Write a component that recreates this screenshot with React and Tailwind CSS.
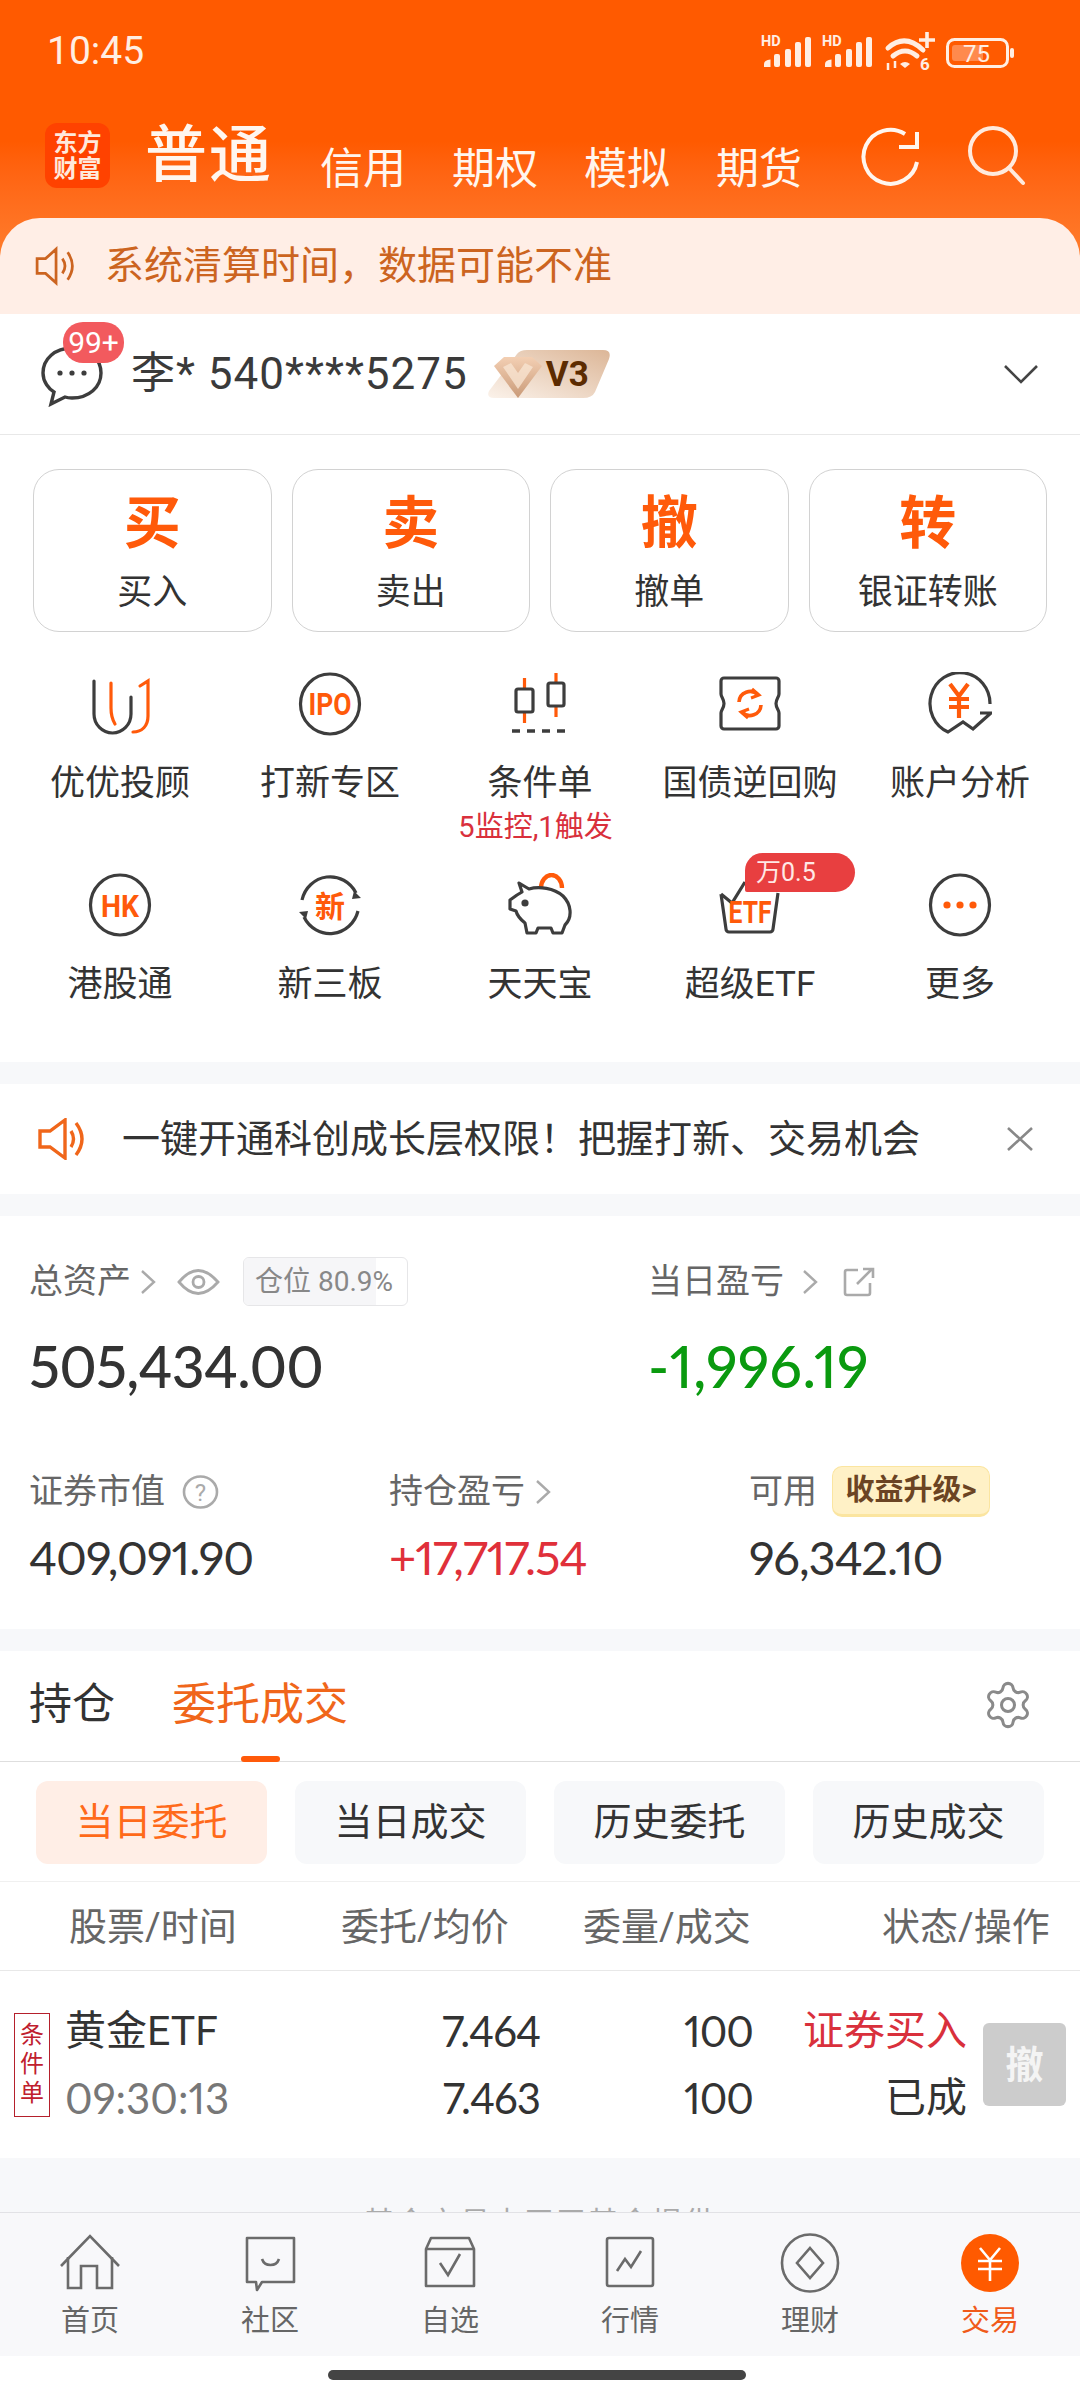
import { Settings } from 'lucide-react';

const DARK = '#3d3d3d';
const ORANGE = '#ff5a0a';
const NUM = "font-['Lato','Noto_Sans_CJK_SC',sans-serif] proportional-nums";

// ── Status bar glyphs ───────────────────────────────────────────────────────
function Signal({ x }) {
  return (
    <g transform={`translate(${x} 0)`} fill="#ffeee3">
      <text x="11" y="25" fontSize="14.5" fontWeight="700" fontFamily="Roboto, sans-serif">HD</text>
      <path d="M14 46 v-3 q0-4 6.5-4.5 v7.5 z" />
      <rect x="24" y="33" width="6" height="13" rx="2" />
      <rect x="35" y="28" width="6" height="18" rx="2" />
      <rect x="45" y="21" width="6" height="25" rx="2" />
      <rect x="55" y="16" width="6" height="30" rx="2" />
    </g>
  );
}

function StatusIcons() {
  return (
    <svg width="280" height="60" viewBox="0 0 280 60" className="block">
      <Signal x="0" />
      <Signal x="61" />
      <g fill="none" stroke="#ffeee3" strokeWidth="5" strokeLinecap="round">
        <path d="M138 27 q17-15 35 2" />
        <path d="M143 35 q12-10 24 0" />
      </g>
      <path d="M150 43 q5-4 10 0 l-5 4 z" fill="#ffeee3" />
      <path d="M177 11 v16 M169 19 h16" stroke="#ffeee3" strokeWidth="3.6" />
      <text x="170" y="49" fontSize="17" fontWeight="700" fill="#ffeee3" fontFamily="Roboto, sans-serif">6</text>
      <path d="M138 42 v7 M145 40 v7" stroke="#ffeee3" strokeWidth="2.5" />
      <rect x="197.5" y="18.5" width="60" height="27" rx="7" fill="none" stroke="#ffeee3" strokeWidth="3" />
      <rect x="202" y="24" width="31" height="16" rx="3" fill="#ff8a4d" />
      <text x="213" y="41" fontSize="24" fill="#ffeee3" fontFamily="Roboto, sans-serif">75</text>
      <rect x="260" y="27" width="4" height="10" rx="2" fill="#ffeee3" />
    </svg>
  );
}

// ── Function grid icons ─────────────────────────────────────────────────────
function IconCircle({ children }) {
  return (
    <svg width="64" height="64" viewBox="0 0 64 64" fill="none">
      <ellipse cx="32" cy="32" rx="29.5" ry="30" stroke={DARK} strokeWidth="3.2" />
      {children}
    </svg>
  );
}

function Glyph({ size = 26, y = 41, fit, children }) {
  return (
    <text
      x="32"
      y={y}
      textAnchor="middle"
      fontSize={size}
      fontWeight="700"
      fill={ORANGE}
      fontFamily="Roboto, 'Noto Sans CJK SC', sans-serif"
      textLength={fit}
      lengthAdjust={fit ? 'spacingAndGlyphs' : undefined}
    >
      {children}
    </text>
  );
}

function Svg64({ children }) {
  return (
    <svg width="64" height="64" viewBox="0 0 64 64" fill="none" strokeWidth="3.2">
      {children}
    </svg>
  );
}

const GRID_ICONS = {
  youyou: (
    <Svg64>
      <path d="M6 9 V42 a18.5 19 0 0 0 37 0 V25" stroke={DARK} strokeLinecap="round" />
      <path d="M23 11 V36 c0 6 1 11 4 16" stroke={ORANGE} strokeLinecap="round" />
      <path d="M45 60 c9 0 15-6 15-16 V9 l-8 5" stroke={ORANGE} strokeLinecap="round" />
    </Svg64>
  ),
  ipo: <IconCircle><Glyph size={31} y={43} fit={43}>IPO</Glyph></IconCircle>,
  candle: (
    <Svg64>
      <path d="M16.5 6 V17 M16.5 40 V51 M48 1 V11 M48 34 V45" stroke={ORANGE} />
      <rect x="8" y="17" width="17" height="23" rx="2" stroke={DARK} />
      <rect x="40" y="11" width="16" height="23" rx="2" stroke={DARK} />
      <path d="M4 59 H60" stroke={DARK} strokeWidth="3.6" strokeDasharray="8 7" />
    </Svg64>
  ),
  ticket: (
    <Svg64>
      <path d="M6 6 H58 a3 3 0 0 1 3 3 V22 c0 3-3 5-3 9.5 s3 6.5 3 9.5 V54 a3 3 0 0 1-3 3 H6 a3 3 0 0 1-3-3 V41 c0-3 3-5 3-9.5 S3 25 3 22 V9 a3 3 0 0 1 3-3 z" stroke={DARK} />
      <path d="M21 30 a11 11 0 0 1 19-7 M43 33 a11 11 0 0 1-19 7" stroke={ORANGE} strokeWidth="3.6" />
      <path d="M34 17 l7 6 -8 3 M30 46 l-7-6 8-3" stroke={ORANGE} strokeWidth="3" />
    </Svg64>
  ),
  yen: (
    <Svg64>
      <path d="M62 32 A30 31 0 1 0 20 60 L35 50 L45 57 L63 41 H52" stroke={DARK} strokeLinejoin="miter" />
      <path d="M22 12 L31 24 L40 12 M21 27 H41 M21 35 H41 M31 24 V46" stroke={ORANGE} strokeWidth="4.2" />
    </Svg64>
  ),
  hk: <IconCircle><Glyph size={32} y={44} fit={38}>HK</Glyph></IconCircle>,
  xin: (
    <Svg64>
      <path d="M4 27 A29 30 0 0 1 58 20 M60 38 A29 30 0 0 1 6 44" stroke={DARK} />
      <path d="M56 18 L63 25 L54 26 z M8 46 L1 39 L10 38 z" fill={DARK} />
      <Glyph size={30} y={44}>新</Glyph>
    </Svg64>
  ),
  pig: (
    <Svg64>
      <path d="M33 15 a10.5 13 0 0 1 21 0" stroke={ORANGE} strokeWidth="4.4" />
      <path d="M11 10 L21 16 C31 13 46 15 55 23 C63 31 65 44 57 52 L54 60 H45 L43 55 H30 L28 60 H19 L17 50 C12 46 9 42 8 38 L2 36 V27 L9 22 L14 19 z" stroke={DARK} strokeLinejoin="round" />
      <circle cx="17" cy="30" r="3.6" fill={DARK} />
    </Svg64>
  ),
  etf: (
    <Svg64>
      <path d="M3 21 L14 30 L27 9 M3 21 L8 56 a3 3 0 0 0 3 3 H52 a3 3 0 0 0 3-3 L60 20" stroke={DARK} />
      <Glyph size={32} y={50} fit={43}>ETF</Glyph>
    </Svg64>
  ),
  more: (
    <IconCircle>
      <circle cx="19" cy="32" r="3.6" fill={ORANGE} />
      <circle cx="32" cy="32" r="3.6" fill={ORANGE} />
      <circle cx="45" cy="32" r="3.6" fill={ORANGE} />
    </IconCircle>
  ),
};

const GRID = [
  { icon: 'youyou', label: '优优投顾' },
  { icon: 'ipo', label: '打新专区' },
  { icon: 'candle', label: '条件单', sub: '5监控,1触发' },
  { icon: 'ticket', label: '国债逆回购' },
  { icon: 'yen', label: '账户分析' },
  { icon: 'hk', label: '港股通' },
  { icon: 'xin', label: '新三板' },
  { icon: 'pig', label: '天天宝' },
  { icon: 'etf', label: '超级ETF', badge: '万0.5' },
  { icon: 'more', label: '更多' },
];

const ACTIONS = [
  ['买', '买入'],
  ['卖', '卖出'],
  ['撤', '撤单'],
  ['转', '银证转账'],
];

// ── Bottom navigation icons ─────────────────────────────────────────────────
function NavSvg({ children }) {
  return (
    <svg width="60" height="60" viewBox="0 0 60 60" fill="none" stroke="#6b6b6b" strokeWidth="2.6">
      {children}
    </svg>
  );
}

const NAV = [
  {
    label: '首页',
    icon: (
      <NavSvg>
        <path d="M1 33 L30 3 L59 33" />
        <path d="M8 24 V55 H21 V33 H37 V55 H52 V24" />
      </NavSvg>
    ),
  },
  {
    label: '社区',
    icon: (
      <NavSvg>
        <path d="M7 5 H54 V49 H22 L17 57 L16 49 H7 z" strokeLinejoin="round" />
        <path d="M22 26 a9 9 0 0 0 17 0" />
      </NavSvg>
    ),
  },
  {
    label: '自选',
    icon: (
      <NavSvg>
        <path d="M6 16 L11 5 H49 L54 16 V53 H6 z M6 16 H54" strokeLinejoin="round" />
        <path d="M20 30 L28 42 L40 21" />
      </NavSvg>
    ),
  },
  {
    label: '行情',
    icon: (
      <NavSvg>
        <rect x="7" y="5" width="46" height="48" rx="2" />
        <path d="M17 38 L25 26 L31 34 L41 18" />
      </NavSvg>
    ),
  },
  {
    label: '理财',
    icon: (
      <NavSvg>
        <ellipse cx="30" cy="30" rx="28" ry="28.5" />
        <path d="M30 15 L43 30 L30 45 L17 30 z" />
      </NavSvg>
    ),
  },
  {
    label: '交易',
    active: true,
    icon: (
      <svg width="60" height="60" viewBox="0 0 60 60" fill="none">
        <circle cx="30" cy="30" r="29" fill="#ff5a00" />
        <path d="M20 15 L30 27 L40 15 M18 28 H42 M18 36 H42 M30 27 V48" stroke="#fff" strokeWidth="2.6" />
      </svg>
    ),
  },
];

const CHIPS = ['当日委托', '当日成交', '历史委托', '历史成交'];

function Chevron({ className }) {
  return (
    <svg className={className} width="16" height="26" viewBox="0 0 16 26" fill="none" stroke="#aaa" strokeWidth="2.4">
      <path d="M2 2 L14 13 L2 24" />
    </svg>
  );
}

export default function App() {
  return (
    <div className="flex h-[2400px] w-[1080px] flex-col overflow-hidden bg-[#f7f8fa] font-['Roboto','Noto_Sans_CJK_SC',sans-serif] text-[#333]">
      {/* ── Orange header + notice ── */}
      <div className="bg-gradient-to-b from-[#ff5a00] from-[45%] to-[#ff7f2e] to-[85%]">
        <div className="flex h-[102px] items-center justify-between pl-[47px] pr-[50px]">
          <span className="text-[39px] leading-none text-[#ffeee3]">10:45</span>
          <StatusIcons />
        </div>

        <div className="flex h-[116px] items-start pl-[45px] pr-[54px] pt-[21px] text-[#fff6ef]">
          <div className="flex h-[65px] w-[65px] flex-col items-center justify-center rounded-[12px] bg-[#ff4200] text-[24px] font-bold leading-[26px] text-[#ffe9dc]">
            <span>东方</span>
            <span>财富</span>
          </div>
          <span className="ml-[35px] mt-[-3px] text-[62px] font-medium leading-[72px] tracking-[2px]">普通</span>
          <div className="ml-[47px] mt-[21px] flex gap-[46px] text-[43px] leading-[50px]">
            <span>信用</span>
            <span>期权</span>
            <span>模拟</span>
            <span>期货</span>
          </div>
          <div className="ml-auto flex gap-[45px] pt-[3px]">
            <svg width="60" height="60" viewBox="0 0 60 60" fill="none" stroke="#fff6ef" strokeWidth="4">
              <path d="M44 8 A27 27 0 1 0 56 36" />
              <path d="M56 6 V21 H38" />
            </svg>
            <svg width="60" height="60" viewBox="0 0 60 60" fill="none" stroke="#ffeadd" strokeWidth="4">
              <circle cx="27" cy="25" r="23" />
              <path d="M43 42 L57 57" strokeLinecap="round" />
            </svg>
          </div>
        </div>

        <div className="flex h-[96px] items-center rounded-t-[40px] bg-[#ffeee6] pl-[35px] text-[39px] text-[#cc6420]">
          <svg width="40" height="40" viewBox="0 0 38 38" fill="none" stroke="#cc6420" strokeWidth="2.6">
            <path d="M2 12 H10 L20 3 V35 L10 26 H2 z" />
            <path d="M26 12 q5 7 0 14 M31 6 q9 13 0 26" />
          </svg>
          <span className="ml-[30px]">系统清算时间，数据可能不准</span>
        </div>
      </div>

      {/* ── Account row ── */}
      <div className="flex h-[121px] items-center border-b border-[#e8e8e8] bg-white pl-[41px] pr-[42px]">
        <div className="relative mt-[4px] h-[62px] w-[62px]">
          <svg width="62" height="62" viewBox="0 0 62 62" fill="none" stroke={DARK} strokeWidth="3.4">
            <path d="M31 3 C14 3 2 14 2 28 C2 37 8 44 13 47 L10 59 L24 52 C27 53 29 53 31 53 C48 53 60 42 60 28 C60 14 48 3 31 3z" />
            <circle cx="19" cy="28" r="2.6" fill={DARK} stroke="none" />
            <circle cx="31" cy="28" r="2.6" fill={DARK} stroke="none" />
            <circle cx="43" cy="28" r="2.6" fill={DARK} stroke="none" />
          </svg>
          <span className="absolute left-[22px] top-[-23px] flex h-[41px] w-[61px] items-center justify-center rounded-[20px] bg-[#f25a5e] text-[30px] leading-none text-white">99+</span>
        </div>
        <span className="ml-[28px] text-[44px] tracking-[1px] text-[#3a3a3a]">李* 540****5275</span>
        <div className="relative ml-[19px] flex h-[50px] w-[124px] items-center">
          <svg className="absolute inset-0" width="124" height="50" viewBox="0 0 124 50">
            <defs>
              <linearGradient id="v3bg" x1="0" y1="1" x2="1" y2="0">
                <stop offset="0" stopColor="#fbf2ea" />
                <stop offset="1" stopColor="#dcb697" />
              </linearGradient>
              <linearGradient id="gem" x1="0" y1="0" x2="0" y2="1">
                <stop offset="0" stopColor="#f3cfb3" />
                <stop offset="1" stopColor="#c99a78" />
              </linearGradient>
            </defs>
            <path d="M30 5 Q33 1 40 1 H116 Q125 1 122 10 L108 43 Q105 49 96 49 H7 Q-1 49 2 42 z" fill="url(#v3bg)" />
            <path d="M7 17 L17 8 H45 L55 17 L31 49 z" fill="url(#gem)" />
            <path d="M16 18 L31 40 L46 18 L38 14 L31 24 L24 14 z" fill="#f8e3d1" opacity="0.8" />
          </svg>
          <span className="relative ml-[59px] text-[35px] font-bold leading-none text-[#5c2b00]">V3</span>
        </div>
        <svg className="ml-auto" width="34" height="20" viewBox="0 0 34 20" fill="none" stroke="#444" strokeWidth="2.6">
          <path d="M1 2 L17 18 L33 2" />
        </svg>
      </div>

      {/* ── Trade actions + function grid ── */}
      <div className="h-[627px] bg-white">
        <div className="grid grid-cols-4 gap-[20px] px-[33px] pt-[34px]">
          {ACTIONS.map(([big, label]) => (
            <div key={big} className="flex h-[163px] flex-col items-center rounded-[26px] border border-[#d2d2d2] pt-[19px]">
              <span className="text-[57px] font-bold leading-[70px] text-[#ff5a0a]">{big}</span>
              <span className="mt-[12px] text-[35px] leading-[44px]">{label}</span>
            </div>
          ))}
        </div>

        <div className="grid grid-cols-5 gap-y-[28px] px-[15px] pt-[40px]">
          {GRID.map((item) => (
            <div key={item.label} className="flex flex-col items-center">
              <div className="relative h-[64px] w-[64px]">
                {GRID_ICONS[item.icon]}
                {item.badge && (
                  <span className="absolute left-[27px] top-[-20px] flex h-[39px] w-[110px] items-center rounded-bl-[2px] rounded-br-[20px] rounded-tl-[18px] rounded-tr-[20px] bg-[#e83f40] pl-[11px] text-[25px] leading-none text-[#ffe8e6]">
                    {item.badge}
                  </span>
                )}
              </div>
              <span className="mt-[28px] whitespace-nowrap text-[35px] leading-[40px]">{item.label}</span>
              {item.sub && <span className="mr-[9px] mt-[5px] whitespace-nowrap text-[29px] leading-[36px] text-[#d9303c]">{item.sub}</span>}
            </div>
          ))}
        </div>
      </div>

      {/* ── Promo banner ── */}
      <div className="mt-[22px] flex h-[110px] items-center bg-white pl-[38px] pr-[47px]">
        <svg width="47" height="42" viewBox="0 0 47 42" fill="none" stroke="#f0661a" strokeWidth="3.4">
          <path d="M2 13 H12 L27 2 V40 L12 29 H2 z" />
          <path d="M33 13 q5 8 0 16 M38 5 q12 16 0 32" />
        </svg>
        <span className="ml-[37px] whitespace-nowrap text-[38px] text-[#333]">一键开通科创成长层权限！把握打新、交易机会</span>
        <svg className="ml-auto" width="26" height="24" viewBox="0 0 26 24" fill="none" stroke="#888" strokeWidth="2.6">
          <path d="M1 1 L25 23 M25 1 L1 23" />
        </svg>
      </div>

      {/* ── Assets ── */}
      <div className="mt-[22px] h-[413px] bg-white pl-[29px] pr-[30px] pt-[41px]">
        <div className="flex">
          <div className="w-[619px]">
            <div className="flex h-[49px] items-center text-[34px] text-[#666]">
              <span>总资产</span>
              <Chevron className="ml-[9px]" />
              <svg className="ml-[21px]" width="43" height="26" viewBox="0 0 43 26" fill="none" stroke="#aaa" strokeWidth="2.8">
                <path d="M2 13 Q21 -10 41 13 Q21 36 2 13 z" />
                <circle cx="21.5" cy="13" r="5.5" />
              </svg>
              <div className="relative ml-[23px] flex h-[49px] w-[165px] items-center overflow-hidden rounded-[6px] border border-[#e6e6e8] bg-white pl-[11px] text-[28px] leading-none text-[#888]">
                <div className="absolute inset-y-0 left-0 w-[81%] bg-[#f6f6f8]" />
                <span className="relative whitespace-nowrap">仓位 80.9%</span>
              </div>
            </div>
            <div className={`${NUM} mt-[30px] text-[57px] font-medium leading-[60px] tracking-[-0.8px] text-[#333]`}>505,434.00</div>
          </div>
          <div>
            <div className="flex h-[49px] items-center text-[34px] text-[#666]">
              <span>当日盈亏</span>
              <Chevron className="ml-[18px]" />
              <svg className="ml-[25px]" width="32" height="30" viewBox="0 0 32 30" fill="none" stroke="#aaa" strokeWidth="2.6">
                <path d="M15 3 H4 a2 2 0 0 0-2 2 V26 a2 2 0 0 0 2 2 H25 a2 2 0 0 0 2-2 V16" />
                <path d="M14 17 L29 2 M20 2 H30 V11" />
              </svg>
            </div>
            <div className={`${NUM} mt-[30px] text-[57px] font-medium leading-[60px] tracking-[0.6px] text-[#0a9a0f]`}>-1,996.19</div>
          </div>
        </div>

        <div className="mt-[70px] flex">
          <div className="w-[360px]">
            <div className="flex h-[51px] items-center text-[34px] text-[#666]">
              <span>证券市值</span>
              <svg className="ml-[17px]" width="37" height="34" viewBox="0 0 37 34" fill="none">
                <ellipse cx="18.5" cy="17" rx="16.5" ry="15.5" stroke="#aaa" strokeWidth="2.6" />
                <text x="18.5" y="26" textAnchor="middle" fontSize="24" fill="#aaa" fontFamily="Roboto, sans-serif">?</text>
              </svg>
            </div>
            <div className={`${NUM} mt-[15px] text-[47px] leading-[50px] tracking-[-1px] text-[#333]`}>409,091.90</div>
          </div>
          <div className="w-[360px]">
            <div className="flex h-[51px] items-center text-[34px] text-[#666]">
              <span>持仓盈亏</span>
              <Chevron className="ml-[10px]" />
            </div>
            <div className={`${NUM} mt-[15px] text-[47px] leading-[50px] tracking-[-1px] text-[#e0303a]`}>+17,717.54</div>
          </div>
          <div>
            <div className="flex h-[51px] items-center text-[34px] text-[#666]">
              <span>可用</span>
              <span className="ml-[15px] flex h-[51px] w-[158px] items-center justify-center rounded-[10px] border border-b-[3px] border-[#fbe5a0] bg-[#fff1c6] text-[29px] font-bold leading-none text-[#6b4423]">收益升级&gt;</span>
            </div>
            <div className={`${NUM} mt-[15px] text-[47px] leading-[50px] tracking-[-1px] text-[#333]`}>96,342.10</div>
          </div>
        </div>
      </div>

      {/* ── Orders ── */}
      <div className="mt-[22px] bg-white">
        <div className="relative flex h-[111px] items-center border-b border-[#dedede] pb-[3px] pl-[29px] pr-[46px]">
          <span className="text-[43px] leading-none text-[#333]">持仓</span>
          <span className="ml-[57px] text-[44px] leading-none text-[#f0661a]">委托成交</span>
          <Settings className="ml-auto" size={52} strokeWidth={1.4} color="#8a8a8a" />
          <span className="absolute bottom-[-1px] left-[241px] h-[6px] w-[39px] rounded-full bg-[#ff5a0a]" />
        </div>
        <div className="grid h-[120px] grid-cols-4 gap-[28px] border-b border-[#f0f0f0] px-[36px] pt-[19px]">
          {CHIPS.map((chip, i) => (
            <div key={chip} className={`flex h-[83px] items-center justify-center rounded-[12px] text-[38px] ${i === 0 ? 'bg-[#ffeee6] text-[#ff6a1a]' : 'bg-[#f7f8fa] text-[#333]'}`}>
              {chip}
            </div>
          ))}
        </div>
        <div className="flex h-[89px] items-center border-b border-[#e8e8e8] pt-[3px] text-[38px] text-[#666]">
          <span className="w-[341px] pl-[69px]">股票/时间</span>
          <span className="w-[242px]">委托/均价</span>
          <span className="w-[299px]">委量/成交</span>
          <span>状态/操作</span>
        </div>
        <div className="flex h-[187px] items-center pl-[14px] text-[41px] leading-[67px]">
          <div className="flex h-[104px] w-[36px] flex-col items-center justify-center border border-[#b5202c] text-[24px] leading-[29px] text-[#c0202e]">
            <span>条</span>
            <span>件</span>
            <span>单</span>
          </div>
          <div className="ml-[15px] flex w-[251px] flex-col">
            <span>黄金ETF</span>
            <span className={`${NUM} text-[42px] text-[#777]`}>09:30:13</span>
          </div>
          <div className={`${NUM} flex w-[224px] flex-col text-right text-[42px] tracking-[-1px]`}>
            <span>7.464</span>
            <span>7.463</span>
          </div>
          <div className={`${NUM} flex w-[213px] flex-col text-right text-[42px] tracking-[-1px]`}>
            <span>100</span>
            <span>100</span>
          </div>
          <div className="flex w-[214px] flex-col text-right">
            <span className="text-[#d9303c]">证券买入</span>
            <span>已成</span>
          </div>
          <div className="ml-[16px] flex h-[83px] w-[83px] items-center justify-center rounded-[6px] bg-[#cccccc] text-[38px] font-bold leading-none text-[#f4f4f4]">撤</div>
        </div>
      </div>

      {/* ── Footer text, clipped by the tab bar ── */}
      <div className="flex flex-1 justify-center overflow-hidden pt-[50px]">
        <span className="text-[30px] leading-none tracking-[2px] text-[#aaa]">基金交易由天天基金提供</span>
      </div>

      {/* ── Bottom nav ── */}
      <div className="grid h-[144px] shrink-0 grid-cols-6 border-t border-[#e2e2e6] bg-[#f8f8fa]">
        {NAV.map((tab) => (
          <div key={tab.label} className="flex flex-col items-center pt-[20px]">
            {tab.icon}
            <span className={`mt-[8px] text-[29px] leading-[40px] ${tab.active ? 'text-[#f05a1a]' : 'text-[#666]'}`}>{tab.label}</span>
          </div>
        ))}
      </div>
      <div className="flex h-[44px] shrink-0 justify-center bg-white pr-[6px] pt-[14px]">
        <div className="h-[10px] w-[418px] rounded-full bg-[#444]" />
      </div>
    </div>
  );
}
